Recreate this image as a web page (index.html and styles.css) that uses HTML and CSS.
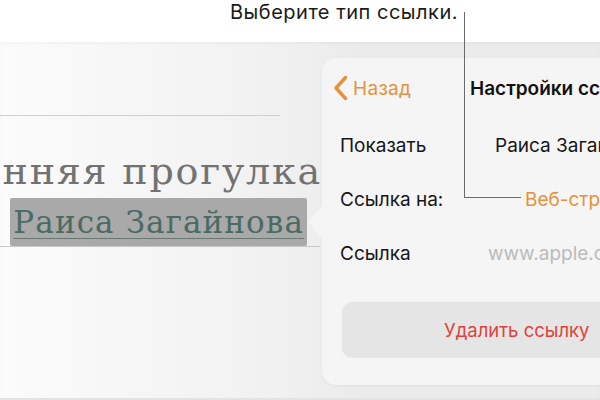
FILE: index.html
```html
<!DOCTYPE html>
<html lang="ru">
<head>
<meta charset="utf-8">
<title>Настройки ссылки</title>
<link rel="stylesheet" href="styles.css">
</head>
<body>
<div class="screen">
  <header class="caption">Выберите тип ссылки.</header>
  <main class="stage">
    <section class="doc">
      <div class="rule"></div>
      <div class="title-line"><span class="title">Весенняя прогулка</span></div>
      <div class="sub-line">
        <span class="sub">Автор:&nbsp;</span><span class="link-hl"><span class="link-text">Раиса Загайнова</span></span>
      </div>
      <div class="rule rule-bottom"></div>
    </section>
    <section class="popover">
      <div class="pop-arrow"></div>
      <div class="pop-head">
        <span class="back">
          <svg class="chev" width="15" height="26" viewBox="0 0 15 26"><path d="M12.5 2.5 L3 13 L12.5 23.5" fill="none" stroke="#e8913b" stroke-width="3.4" stroke-linecap="round" stroke-linejoin="round"/></svg>
          <span class="back-text">Назад</span>
        </span>
        <span class="pop-title">Настройки ссылки</span>
      </div>
      <div class="row"><span class="label">Показать</span><span class="val val-name">Раиса Загайнова</span></div>
      <div class="row"><span class="label">Ссылка на:</span><span class="val val-type">Веб-страница</span></div>
      <div class="row"><span class="label">Ссылка</span><span class="val val-url">www.apple.com</span></div>
      <div class="btn">Удалить ссылку</div>
    </section>
    <div class="callout">
      <div class="callout-v"></div>
      <div class="callout-h"></div>
    </div>
  </main>
</div>
</body>
</html>
```
FILE: styles.css
```css
* { box-sizing: border-box; }
html, body { margin: 0; padding: 0; }
body {
  width: 600px;
  height: 400px;
  overflow: hidden;
  background: #ffffff;
  font-family: Inter, "Liberation Sans", Arial, sans-serif;
}
.screen { width: 600px; height: 400px; display: flex; flex-direction: column; position: relative; }

.caption {
  height: 42px;
  flex: none;
  background: #ffffff;
  text-align: right;
  padding-right: 142px;
  padding-top: 1px;
  font-size: 20px;
  letter-spacing: 0.5px;
  line-height: 22px;
  color: #1a1a1a;
  white-space: nowrap;
}

.stage {
  flex: 1;
  display: flex;
  background: linear-gradient(to right, #fbfbfb 0%, #f1f1f1 45%, #ebebeb 60%, #ebebeb 100%);
  border-bottom: 2px solid #e3e3e3;
  box-shadow: inset 0 2px 3px rgba(0,0,0,0.03);
  overflow: hidden;
}

.doc {
  width: 322px;
  flex: none;
  padding-top: 73px;
  display: flex;
  flex-direction: column;
}
.rule { width: 280px; height: 1px; background: #cfcfcf; }
.rule-bottom { width: 320px; background: #c9c9c9; }

.title-line {
  display: flex;
  justify-content: flex-end;
  overflow: hidden;
  width: 322px;
  height: 80px;
  padding-top: 35px;
  white-space: nowrap;
}
.title {
  font-family: "DejaVu Serif", "Liberation Serif", serif;
  font-size: 38px;
  line-height: 40px;
  color: #727272;
  letter-spacing: 1.8px;
}
.sub-line {
  display: flex;
  justify-content: flex-end;
  align-items: flex-end;
  overflow: hidden;
  width: 322px;
  padding-right: 15px;
  white-space: nowrap;
  height: 50px;
}
.sub {
  font-family: "DejaVu Serif", "Liberation Serif", serif;
  font-size: 31px;
  line-height: 46px;
  color: #7a7a7a;
}
.link-hl {
  background: #a9a9a9;
  border-radius: 2px;
  height: 48px;
  padding: 0 3px 0 3px;
  display: flex;
  align-items: center;
}
.link-text {
  font-family: "DejaVu Serif", "Liberation Serif", serif;
  font-size: 31px;
  line-height: 34px;
  color: #4a6b63;
  letter-spacing: 1.1px;
  text-decoration: underline;
  text-decoration-color: #6a7874;
  text-underline-offset: 5px;
  text-decoration-thickness: 1px;
}

.popover {
  position: relative;
  flex: none;
  width: 300px;
  margin-top: 16px;
  height: 327px;
  background: #f5f5f5;
  border-radius: 14px 0 0 14px;
  box-shadow: 0 1px 3px rgba(0,0,0,0.05);
}
.pop-arrow {
  position: absolute;
  left: -14px;
  top: 147px;
  width: 0;
  height: 0;
  border-top: 17px solid transparent;
  border-bottom: 17px solid transparent;
  border-right: 15px solid #f5f5f5;
}
.pop-head {
  height: 60px;
  display: flex;
  align-items: center;
  padding-left: 11px;
  white-space: nowrap;
}
.back { display: flex; align-items: center; width: 137px; flex: none; }
.chev { margin-right: 5px; flex: none; }
.back-text { font-size: 19px; color: #e8913b; letter-spacing: 0.3px; }
.pop-title { font-size: 19px; font-weight: 600; color: #111; white-space: nowrap; flex: none; }

.row {
  height: 54px;
  display: flex;
  align-items: center;
  padding-left: 18px;
  font-size: 19px;
  white-space: nowrap;
}
.label { width: 148px; color: #151515; flex: none; }
.val { flex: none; }
.val-name { margin-left: 7px; color: #151515; }
.val-type { margin-left: 37px; color: #e8913b; }
.val-url { margin-left: 0; color: #bbbbbb; }

.btn {
  margin: 22px 0 0 20px;
  height: 56px;
  background: #e5e5e5;
  border-radius: 10px 0 0 10px;
  display: flex;
  align-items: center;
  padding-left: 102px;
  font-size: 18.5px;
  color: #e2403a;
  white-space: nowrap;
}

.callout { position: absolute; left: 464px; top: 12px; }
.callout-v { position: absolute; left: 0; top: 0; width: 1px; height: 186px; background: #6b6b6b; }
.callout-h { position: absolute; left: 0; top: 185px; width: 57px; height: 1px; background: #6b6b6b; }
```
